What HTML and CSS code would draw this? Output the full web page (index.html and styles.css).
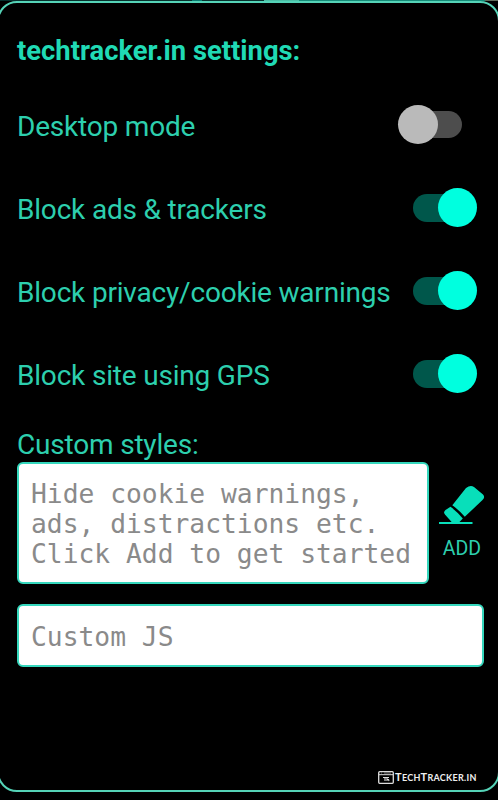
FILE: index.html
```html
<!DOCTYPE html>
<html lang="en">
<head>
<meta charset="utf-8">
<title>Site settings</title>
<link rel="stylesheet" href="styles.css">
</head>
<body>
<div class="backdrop"></div>
<main class="panel">
  <h1 class="title">techtracker.in settings:</h1>
  <div class="row"><span class="label">Desktop mode</span><span class="toggle off"></span></div>
  <div class="row"><span class="label">Block ads &amp; trackers</span><span class="toggle"></span></div>
  <div class="row"><span class="label">Block privacy/cookie warnings</span><span class="toggle"></span></div>
  <div class="row"><span class="label">Block site using GPS</span><span class="toggle"></span></div>
  <div class="label styles-label">Custom styles:</div>
  <div class="styles">
    <div class="field styles-field">Hide cookie warnings,<br>ads, distractions etc.<br>Click Add to get started</div>
    <div class="add">
      <svg class="eraser" width="48" height="42" viewBox="0 0 48 42">
        <path d="M28 3Q32.500 -.5 36 2L45 9.500Q47.500 12 44.500 15L26.800 31.800Q21 25 14.300 20.300Z"/>
        <path d="M12.500 21.800Q19.500 27 24.800 33.500L20.500 38H14.500L7 29.500Q5 27 7.500 25Z"/>
        <path d="M1 37H34.500V39H1Z"/>
      </svg>
      <span class="add-text">ADD</span>
    </div>
  </div>
  <div class="field js-field">Custom JS</div>
  <footer class="brand">
    <svg width="16" height="13" viewBox="0 0 16 13">
      <rect x=".7" y=".7" width="14.600" height="11.600" rx="1" fill="none" stroke="#ddd" stroke-width="1.300"/>
      <path d="M1 3.700H15" stroke="#ddd"/>
      <path d="M3 2H4M6 2H13" stroke="#999" stroke-width=".8"/>
      <path d="M5 6.500H11M7 6.500V10M9 7V10M9 8.500H10.500L11 10" fill="none" stroke="#ddd" stroke-width="1.100"/>
    </svg>
    <span class="brand-text">T<small>ECH</small>T<small>RACKER.IN</small></span>
  </footer>
</main>
</body>
</html>
```
FILE: styles.css
```css
* { box-sizing: border-box; }
body {
  margin: 0;
  height: 800px;
  overflow: hidden;
  background: #000;
  font-family: Roboto, sans-serif;
  color: #2dcfae;
}
.backdrop {
  height: 1px;
  background: linear-gradient(90deg, #07302e 0 192px, #087a70 192px 202px, #07302e 202px 264px, #4bbda5 264px 299px, #168b79 299px 485px, #626b5c 485px);
}
.panel {
  display: flex;
  flex-direction: column;
  width: 503px;
  height: 791px;
  margin-left: -3px;
  padding: 0 17px 0 18px;
  background: #000;
  border: 2px solid #55d3b7;
  border-radius: 20px;
}
.title {
  margin: 32px 0 0;
  height: 32px;
  font-size: 27.400px;
  line-height: 32px;
  font-weight: 700;
  color: #20dab5;
  white-space: nowrap;
}
.row {
  display: flex;
  align-items: center;
  justify-content: space-between;
  height: 83px;
  padding-right: 19px;
}
.title + .row { margin-top: 16px; }
.label {
  font-size: 28px;
  letter-spacing: -0.190px;
  line-height: 32px;
  white-space: nowrap;
}
.row .label { padding-top: 4px; }
.toggle {
  position: relative;
  flex: none;
  width: 64px;
  height: 40px;
}
.toggle::before {
  content: "";
  position: absolute;
  left: 0;
  top: 6px;
  width: 49px;
  height: 28px;
  border-radius: 14px;
  background: #00574b;
}
.toggle::after {
  content: "";
  position: absolute;
  right: 0;
  top: 0;
  width: 39px;
  height: 39px;
  border-radius: 50%;
  background: #00ffdf;
}
.row .toggle:not(.off) { margin-right: -15px; }
.toggle.off::before { left: 15px; background: #4d4d4d; height: 27px; }
.toggle.off::after { left: 0; right: auto; width: 40px; background: #bababa; }
.styles-label { margin-top: 14px; }
.styles { display: flex; margin-top: 1px; }
.field {
  flex: none;
  background: #fff;
  border: 2px solid #35d7bd;
  border-radius: 6px;
  padding-left: 12px;
  font: 26.300px/30px "DejaVu Sans Mono", monospace;
  color: #8a8a8a;
  white-space: nowrap;
}
.styles-field { width: 412px; height: 122px; padding-top: 15px; }
.js-field { width: 467px; height: 63px; margin-top: 20px; padding-top: 16px; }
.add {
  flex: none;
  display: flex;
  flex-direction: column;
  align-items: center;
  width: 48px;
  margin-left: 9px;
  padding-top: 23px;
}
.eraser { fill: #08dfba; }
.add-text { margin-top: 10px; font-size: 19.500px; line-height: 24px; }
.brand {
  display: flex;
  align-items: center;
  gap: 1px;
  margin-top: auto;
  margin-bottom: 5px;
  padding-left: 361px;
  color: #eee;
}
.brand-text { font: 700 11px/14px Lato, sans-serif; letter-spacing: 0.270px; white-space: nowrap; }
.brand-text small { font-size: 9px; }
```
